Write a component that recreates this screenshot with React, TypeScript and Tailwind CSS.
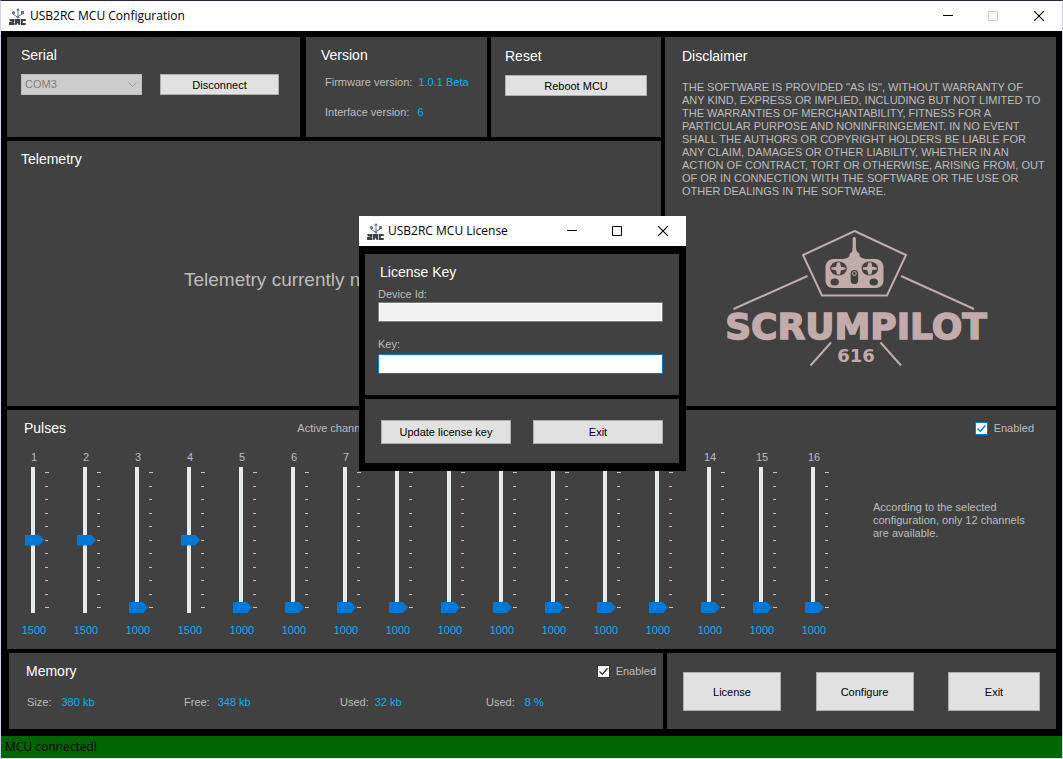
import React from "react";

type ButtonProps = { children: React.ReactNode; className?: string };

function Button({ children, className = "" }: ButtonProps) {
  return (
    <button
      type="button"
      className={`flex items-center justify-center border border-[#adadad] bg-[#e1e1e1] pt-px text-[11px] text-black ${className}`}
    >
      {children}
    </button>
  );
}

function Title({ children }: { children: React.ReactNode }) {
  return <h2 className="text-[14px] leading-4 text-white">{children}</h2>;
}

function Field({ label, value, className = "" }: { label: string; value: string; className?: string }) {
  return (
    <div className={`flex text-[11px] leading-4 ${className}`}>
      <span className="text-[#bdbdbd]">{label}</span>
      <span className="text-[#00b4f5]">{value}</span>
    </div>
  );
}

function AppIcon() {
  return (
    <svg viewBox="0 0 17 17" className="h-[17px] w-[17px] shrink-0" aria-hidden="true">
      <g stroke="#6d7488" strokeWidth="1" fill="none">
        <path d="M9 1.5v8.5M4.5 5v1.5L9 9.500M13.500 4.500v1.500L9 8.500" />
      </g>
      <path d="M9 0l2 2.500H7z" fill="#6d7488" />
      <circle cx="4.500" cy="4.800" r="1.700" fill="#6d7488" />
      <rect x="12" y="3" width="3" height="3" fill="#6d7488" />
      <circle cx="9" cy="9.300" r="1.300" fill="#6d7488" />
      <g fill="none" stroke="#3a3d46" strokeWidth="1.900">
        <path d="M.5 12h4v1.800l-3.500 1v1.200H5.500" />
        <path d="M7 16.700V12h3.200v2.200H7.500M9 14l1.700 2.700" />
        <path d="M16.700 12h-3.900v4h3.900" />
      </g>
    </svg>
  );
}

function TitleBar({ title, maximizable }: { title: string; maximizable: boolean }) {
  return (
    <header className="flex h-[30px] shrink-0 items-center bg-white pl-2">
      <AppIcon />
      <h1 className="grow pl-1 font-['Open_Sans','Noto_Sans',sans-serif] text-[12px] text-black">{title}</h1>
      <button type="button" aria-label="Minimize" className="flex h-full w-[45px] items-center justify-center text-black">
        <svg viewBox="0 0 10 10" className="h-[10px] w-[10px]"><path d="M0 4.500h10" stroke="currentColor" /></svg>
      </button>
      <button
        type="button"
        aria-label="Maximize"
        disabled={!maximizable}
        className="flex h-full w-[45px] items-center justify-center text-black disabled:text-[#cccccc]"
      >
        <svg viewBox="0 0 10 10" className="h-[10px] w-[10px]"><path d="M.5.5h9v9h-9z" fill="none" stroke="currentColor" /></svg>
      </button>
      <button type="button" aria-label="Close" className="flex h-full w-[47px] items-center justify-center text-black">
        <svg viewBox="0 0 10 10" className="h-[10px] w-[10px]"><path d="M0 0l10 10M10 0L0 10" stroke="currentColor" strokeWidth="1.100" /></svg>
      </button>
    </header>
  );
}

function Check({ accent }: { accent: boolean }) {
  return (
    <label className="flex items-center gap-[6px] text-[11px] leading-4 text-[#bdbdbd]">
      <span className={`relative block h-[13px] w-[13px] ${accent ? "text-[#0078d7]" : "text-[#333333]"}`}>
        <input
          type="checkbox"
          defaultChecked
          className="peer block h-[13px] w-[13px] appearance-none border border-current bg-white"
        />
        <svg viewBox="0 0 13 13" className="pointer-events-none absolute inset-0 hidden h-[13px] w-[13px] peer-checked:block">
          <path d="M2.500 6.500l2.800 2.800 5.200-6" fill="none" stroke="currentColor" strokeWidth="1.300" />
        </svg>
      </span>
      Enabled
    </label>
  );
}

const channels = [1500, 1500, 1000, 1500, 1000, 1000, 1000, 1000, 1000, 1000, 1000, 1000, 1000, 1000, 1000, 1000];
const ticks = [0, 1, 2, 3, 4, 5, 6, 7, 8, 9, 10];

function Channel({ index, value }: { index: number; value: number }) {
  const id = `channel-${index}`;
  return (
    <div className="flex w-[52px] flex-col text-center text-[11px] leading-4">
      <label htmlFor={id} className="text-[#bdbdbd]">{index}</label>
      <div className="mt-[2px] flex h-[146px] pl-[17px]">
        <input
          id={id}
          type="range"
          min={1000}
          max={2000}
          defaultValue={value}
          className="h-[146px] w-[20px] appearance-none bg-transparent [direction:rtl] [writing-mode:vertical-lr] [&::-webkit-slider-runnable-track]:h-[146px] [&::-webkit-slider-runnable-track]:w-[4px] [&::-webkit-slider-runnable-track]:bg-[#e7eaea] [&::-webkit-slider-runnable-track]:ml-[-4px] [&::-webkit-slider-thumb]:ml-[-6px] [&::-webkit-slider-thumb]:h-[11px] [&::-webkit-slider-thumb]:w-[19px] [&::-webkit-slider-thumb]:appearance-none [&::-webkit-slider-thumb]:bg-[#0078d7] [&::-webkit-slider-thumb]:[clip-path:polygon(0_0,74%_0,100%_50%,74%_100%,0_100%)]"
        />
        <div className="mt-[5px] flex h-[136px] w-[4px] flex-col justify-between" aria-hidden="true">
          {ticks.map((t) => (
            <span key={t} className="block h-px w-[3px] bg-[#c4c4c4] first:w-[4px] last:w-[4px]" />
          ))}
        </div>
      </div>
      <output htmlFor={id} className="mt-[9px] text-[#00b4f5]">{value}</output>
    </div>
  );
}

function Logo() {
  return (
    <svg viewBox="0 0 270 140" className="h-[140px] w-[270px]" role="img" aria-label="Scrumpilot 616">
      <g fill="none" stroke="#c2abab" strokeWidth="2">
        <path d="M133.500 2l51.500 24L166 66.500h-65L82 26z" />
        <path d="M86.500 47L12.500 80M180 47l73 33M110 113.500l-20.500 23M159.500 113.500l20.500 23" />
      </g>
      <g fill="#c2abab">
        <rect x="131.700" y="8" width="3.200" height="16" rx="1.500" />
        <path d="M131.500 19h3.500l.5 3 3 3v2c1 1.500 3.500 2.500 6 3h10c5 0 8 4 8 8v13c0 5-3 8-8 8h-42c-5 0-8-3-8-8V38c0-4 3-8 8-8h10c2.500-.5 5-1.500 6-3v-2l3-3z" />
      </g>
      <g fill="#414141">
        <ellipse cx="117.500" cy="39.500" rx="8.300" ry="7" />
        <ellipse cx="148.800" cy="39.500" rx="8.300" ry="7" />
        <ellipse cx="113.700" cy="53" rx="4.200" ry="3.500" />
        <ellipse cx="152.700" cy="53" rx="4.200" ry="3.500" />
        <rect x="129.700" y="41" width="7.400" height="14" rx="3.600" />
      </g>
      <path
        fill="#c2abab"
        d="M116 33.500h3l1 4.200 4.500.8v2l-4.500.8-1 4.200h-3l-1-4.200-4.500-.8v-2l4.500-.8zM147.300 33.500h3l1 4.200 4.500.8v2l-4.500.8-1 4.200h-3l-1-4.200-4.500-.8v-2l4.500-.8z"
      />
      <rect x="131.700" y="42.500" width="3.400" height="4" rx="1.500" fill="none" stroke="#c2abab" />
      <text x="135" y="110" textAnchor="middle" className="fill-[#c2abab] stroke-[#c2abab] stroke-[1.5px] font-['DejaVu_Sans',sans-serif] text-[36px] font-bold">
        SCRUMPILOT
      </text>
      <text x="135" y="133" textAnchor="middle" className="fill-[#c2abab] font-['DejaVu_Sans',sans-serif] text-[18px] font-bold">
        616
      </text>
    </svg>
  );
}

function LicenseDialog() {
  return (
    <section role="dialog" aria-label="USB2RC MCU License" className="absolute left-[358px] top-[215px] w-[327px] bg-black">
      <TitleBar title="USB2RC MCU License" maximizable />
      <div className="flex flex-col gap-1 pt-2 pr-[7px] pb-2 pl-[6px]">
        <div className="flex h-[141px] flex-col bg-[#414141] pt-[10px] pr-[16px] pl-[13px]">
          <div className="pl-[2px]">
            <Title>License Key</Title>
          </div>
          <label htmlFor="device" className="mt-[6px] text-[11px] leading-4 text-[#bdbdbd]">Device Id:</label>
          <input id="device" readOnly className="h-5 border border-[#7a7a7a] bg-[#f0f0f0] px-1 text-[11px] shadow-[inset_0_0_0_1px_white]" />
          <label htmlFor="key" className="mt-[14px] text-[11px] leading-4 text-[#bdbdbd]">Key:</label>
          <input id="key" className="mt-[2px] h-5 border border-[#0078d7] bg-white px-1 text-[11px] outline-none" />
        </div>
        <div className="flex h-16 items-center justify-between bg-[#414141] pt-px pr-[16px] pl-4">
          <Button className="h-6 w-[130px]">Update license key</Button>
          <Button className="h-6 w-[130px]">Exit</Button>
        </div>
      </div>
    </section>
  );
}

export default function App() {
  return (
    <div className="relative flex min-h-screen flex-col border border-t-[#2c2636] border-r-[#cfd3e6] border-b-[#e4e4ea] border-l-[#cfd3e6] bg-black font-['Liberation_Sans',Arial,sans-serif]">
      <TitleBar title="USB2RC MCU Configuration" maximizable={false} />

      <main className="flex grow flex-col gap-1 pt-[6px] pr-[6px] pb-[7px] pl-[6px]">
        <div className="flex gap-1">
          <div className="flex grow flex-col gap-1">
            <div className="flex h-[100px] gap-1">
              <section className="grow bg-[#414141] px-[14px] pt-[10px]">
                <Title>Serial</Title>
                <div className="mt-[11px] flex gap-[18px]">
                  <div className="relative">
                    <select
                      disabled
                      aria-label="Serial port"
                      className="block h-[21px] w-[121px] appearance-none border border-[#bfbfbf] bg-[#cccccc] px-[3px] text-[11px] text-[#7c7c7c] opacity-100"
                    >
                      <option>COM3</option>
                    </select>
                    <svg viewBox="0 0 9 5" className="pointer-events-none absolute top-2 right-[5px] h-[5px] w-[9px]">
                      <path d="M.5.5l4 4 4-4" fill="none" stroke="#a0a0a0" />
                    </svg>
                  </div>
                  <Button className="h-[21px] w-[119px]">Disconnect</Button>
                </div>
              </section>
              <section className="ml-[2px] w-[181px] bg-[#414141] px-[15px] pt-[10px]">
                <Title>Version</Title>
                <div className="flex flex-col gap-[14px] pt-[11px] pl-[4px]">
                  <Field label="Firmware version:" value="1.0.1 Beta" className="gap-[6px]" />
                  <Field label="Interface version:" value="6" className="gap-2" />
                </div>
              </section>
              <section className="w-[170px] bg-[#414141] px-[14px] pt-[11px]">
                <Title>Reset</Title>
                <Button className="mt-[11px] h-[21px] w-[142px]">Reboot MCU</Button>
              </section>
            </div>
            <section className="h-[265px] bg-[#414141] px-[14px] pt-[10px]">
              <Title>Telemetry</Title>
              <p className="pt-[101px] pl-[163px] text-[19px] leading-6 text-[#bdbdbd]">Telemetry currently not available.</p>
            </section>
          </div>

          <section className="flex w-[391px] flex-col bg-[#414141] px-[17px] pt-[11px]">
            <Title>Disclaimer</Title>
            <p className="pt-[17px] text-[11px] leading-[13px] whitespace-pre text-[#bdbdbd]">
              {`THE SOFTWARE IS PROVIDED "AS IS", WITHOUT WARRANTY OF
ANY KIND, EXPRESS OR IMPLIED, INCLUDING BUT NOT LIMITED TO
THE WARRANTIES OF MERCHANTABILITY, FITNESS FOR A
PARTICULAR PURPOSE AND NONINFRINGEMENT. IN NO EVENT
SHALL THE AUTHORS OR COPYRIGHT HOLDERS BE LIABLE FOR
ANY CLAIM, DAMAGES OR OTHER LIABILITY, WHETHER IN AN
ACTION OF CONTRACT, TORT OR OTHERWISE, ARISING FROM, OUT
OF OR IN CONNECTION WITH THE SOFTWARE OR THE USE OR
OTHER DEALINGS IN THE SOFTWARE.`}
            </p>
            <div className="flex justify-center pt-[31px] pr-[9px]">
              <Logo />
            </div>
          </section>
        </div>

        <section className="flex h-[239px] flex-col bg-[#414141]">
          <div className="flex justify-between pt-[10px] pr-[22px] pl-[17px]">
            <Title>Pulses</Title>
            <div className="w-[446px]">
              <Field label="Active channels:" value="12" className="gap-2" />
            </div>
            <Check accent />
          </div>
          <div className="flex pt-[13px]">
            <div className="flex pl-px">
              {channels.map((v, i) => (
                <Channel key={i} index={i + 1} value={v} />
              ))}
            </div>
            <p className="ml-[33px] w-[160px] pt-[52px] text-[11px] leading-[13px] text-[#bdbdbd]">
              According to the selected configuration, only 12 channels are available.
            </p>
          </div>
        </section>

        <div className="flex h-[76px] gap-1 pl-[2px]">
          <section className="grow bg-[#414141] pt-[10px] pr-[7px] pl-[17px]">
            <div className="flex justify-between">
              <Title>Memory</Title>
              <Check accent={false} />
            </div>
            <div className="grid grid-cols-[157px_156px_146px_1fr] pt-[15px] pl-px">
              <Field label="Size:" value="380 kb" className="gap-[10px]" />
              <Field label="Free:" value="348 kb" className="gap-2" />
              <Field label="Used:" value="32 kb" className="gap-[6px]" />
              <Field label="Used:" value="8 %" className="gap-[10px]" />
            </div>
          </section>
          <section className="flex w-[389px] items-center justify-between bg-[#414141] px-4 pt-px">
            <Button className="h-[39px] w-[98px]">License</Button>
            <Button className="h-[39px] w-[98px]">Configure</Button>
            <Button className="h-[39px] w-[92px]">Exit</Button>
          </section>
        </div>
      </main>

      <footer className="flex h-[22px] shrink-0 items-center bg-[#006400] pl-1 font-['Open_Sans','Noto_Sans',sans-serif] text-[12px] text-black">
        MCU connected!
      </footer>

      <LicenseDialog />
    </div>
  );
}
